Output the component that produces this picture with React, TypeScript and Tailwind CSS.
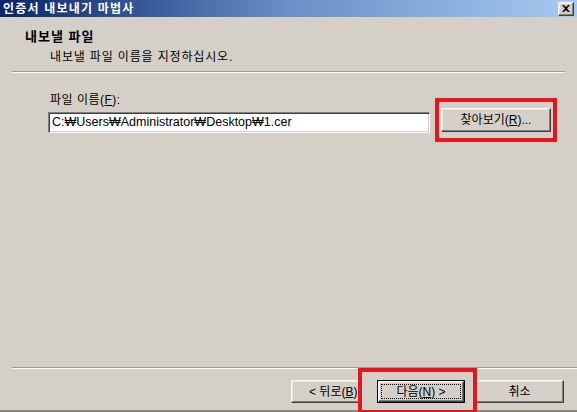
const FONT = "font-['Liberation_Sans','Noto_Sans_CJK_KR',sans-serif]"

const RAISED =
  'border border-t-white border-l-white border-r-[#404040] border-b-[#404040] shadow-[inset_-1px_-1px_0_#808080,inset_1px_1px_0_#e8e6e0]'

function Separator({ className = '' }: { className?: string }) {
  return (
    <div className={className}>
      <div className="h-px bg-[#a09d96]" />
      <div className="h-px bg-white" />
    </div>
  )
}

export default function App() {
  return (
    <div className={`relative w-[577px] h-[412px] bg-[#d4d0c8] flex flex-col overflow-hidden text-[12px] text-black ${FONT}`}>
      {/* Title bar */}
      <div className="h-[17px] flex items-center justify-between pl-[3px] pr-[3px] bg-gradient-to-r from-[#0a246a] via-[#6b8fc7] to-[#a6caf0]">
        <span className="text-white font-bold leading-[14px] tracking-[1.2px]">인증서 내보내기 마법사</span>
        <div className={`w-[16px] h-[14px] bg-[#d4d0c8] flex items-center justify-center ${RAISED}`}>
          <svg width="8" height="7" viewBox="0 0 8 7">
            <path d="M0 0h2l2 2 2-2h2L5 3.5 8 7H6L4 5 2 7H0l3-3.5z" fill="#000" />
          </svg>
        </div>
      </div>

      {/* Header */}
      <div className="pl-[25px] pt-[13px]">
        <div className="font-bold text-[13px] leading-[14px] tracking-[1px]">내보낼 파일</div>
        <div className="pl-[25px] mt-[6px] leading-[14px] tracking-[0.85px]">내보낼 파일 이름을 지정하십시오.</div>
      </div>
      <Separator className="mt-[7px] ml-[12px] mr-[12px]" />

      {/* Body */}
      <div className="pl-[50px] mt-[20px] leading-[14px] tracking-[0.5px]">
        파일 이름(<span className="underline">F</span>):
      </div>
      <div className="flex items-start pl-[48px] mt-[1px]">
        <div className="mt-[4px] w-[382px] h-[21px] bg-white border border-t-[#808080] border-l-[#808080] border-r-white border-b-white shadow-[inset_1px_1px_0_#404040,inset_-1px_-1px_0_#d4d0c8] flex items-center pl-[3px] text-[12.5px]">
          C:₩Users₩Administrator₩Desktop₩1.cer
        </div>
        <button className={`ml-[11px] w-[110px] h-[24px] bg-[#d4d0c8] flex items-center justify-center ${RAISED}`}>
          찾아보기(<span className="underline">R</span>)...
        </button>
      </div>

      <div className="flex-1" />

      {/* Footer */}
      <Separator className="ml-[12px]" />
      <div className="flex items-start justify-end pr-[13px] mt-[11px] pb-[7px]">
        <button className={`w-[71px] h-[23px] bg-[#d4d0c8] flex items-center justify-start pl-[17px] overflow-hidden whitespace-nowrap ${RAISED}`}>
          &lt; 뒤로(<span className="underline">B</span>)
        </button>
        <button className="ml-[15px] w-[88px] h-[23px] bg-[#d4d0c8] border border-black p-0">
          <div className={`w-full h-full p-[2px] ${RAISED}`}>
            <div className="w-full h-full border border-dotted border-black flex items-center justify-center">
              다음(<span className="underline">N</span>) &gt;
            </div>
          </div>
        </button>
        <button className={`ml-[10px] w-[89px] h-[23px] bg-[#d4d0c8] flex items-center justify-center ${RAISED}`}>
          취소
        </button>
      </div>
      <div className="h-[2px] bg-[#8a8780]" />

      {/* Annotation highlights */}
      <div className="absolute left-[435px] top-[98px] w-[122px] h-[44px] border-4 border-[#e8141e]" />
      <div className="absolute left-[358px] top-[368px] w-[119px] h-[46px] border-4 border-[#e8141e]" />
    </div>
  )
}
